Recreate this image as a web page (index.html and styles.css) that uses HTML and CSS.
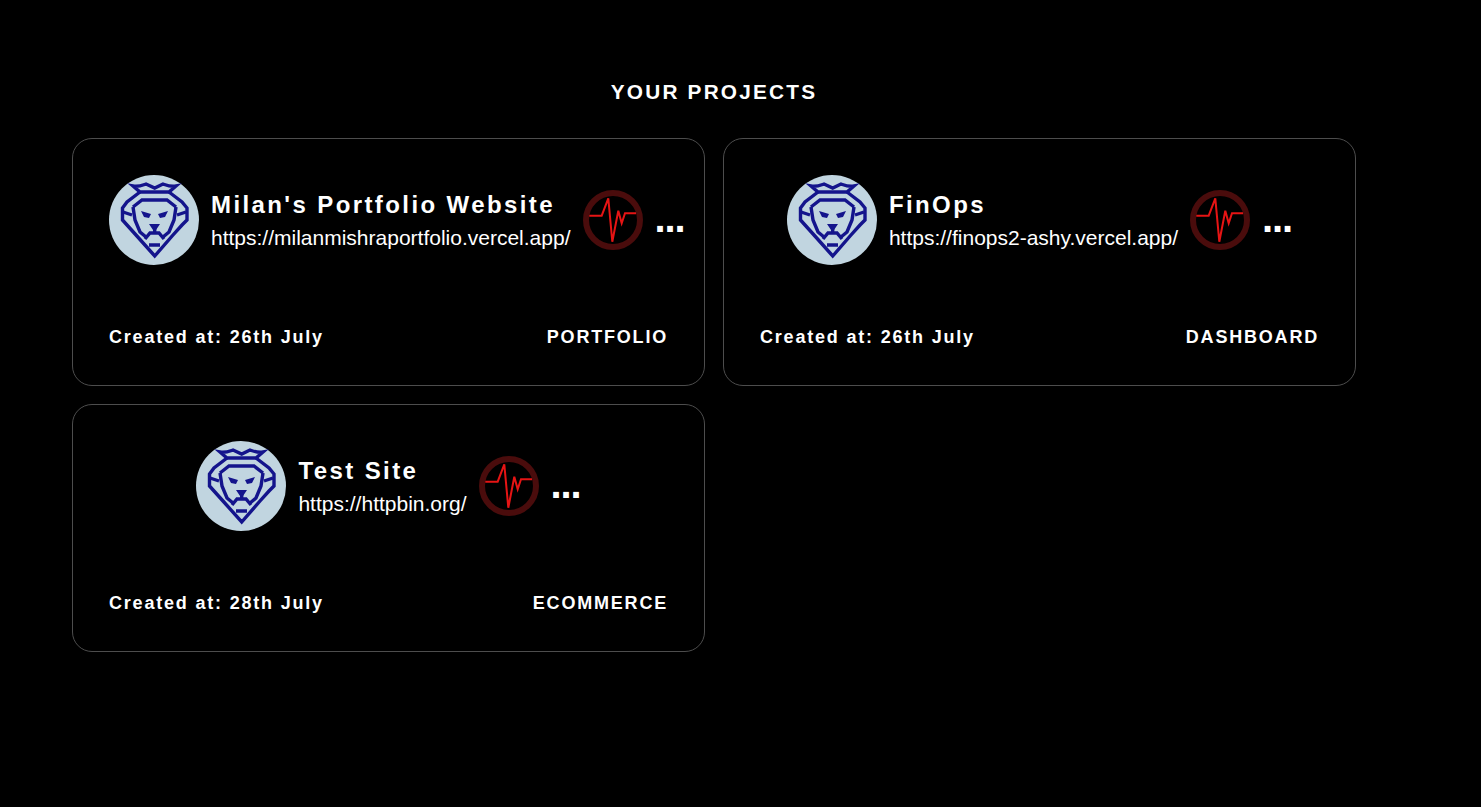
FILE: index.html
```html
<!DOCTYPE html>
<html lang="en">
<head>
<meta charset="utf-8">
<title>Your Projects</title>
<link rel="stylesheet" href="styles.css">
</head>
<body>
<svg class="defs" width="0" height="0" aria-hidden="true">
  <symbol id="lion" viewBox="0 0 90 90">
    <circle cx="45" cy="45" r="45" fill="#c1d5e0"/>
    <g fill="none" stroke="#14148c" stroke-width="3.400" stroke-linejoin="miter" stroke-linecap="butt">
      <path d="M24 11 C30 12 34 10 37 9 L45.700 13 L54 9 C57 10 61 12 67 11 L60 17 H31 Z"/>
      <path d="M31 17 L18 27 L13.500 33 L13.500 45 L18 50 L27 60 L45.700 81 L64 60 L73 50 L78 45 L78 33 L73 27 L60 17"/>
      <path d="M14 37 L23 40 M77 37 L68 40"/>
      <path d="M24 32 L33 25 H58 L67 32"/>
      <path d="M24 32 L26 45 L31 57 L37 62"/>
      <path d="M67 32 L65 45 L60 57 L54 62"/>
      <path d="M45.700 52 V58 M36 64 L41 58 H50 L55 64 M40 70 H51"/>
    </g>
    <path d="M32 36 L42 39 L40 43 L35 42 Z M59 36 L49 39 L51 43 L56 42 Z M40 49 H51 L47 55 H44 Z" fill="#14148c"/>
  </symbol>
  <symbol id="pulse" viewBox="0 0 60 60">
    <circle cx="30" cy="30" r="27" fill="none" stroke="#4a0c0c" stroke-width="6"/>
    <path d="M6.300 25.700 H18.700 L25.300 8.300 L29.300 51.700 L35.300 20.700 L38.700 33.300 L42 23.300 H53" fill="none" stroke="#e61414" stroke-width="2"/>
  </symbol>
</svg>
<main class="page">
  <h1 class="heading">YOUR PROJECTS</h1>
  <section class="grid">
    <article class="card">
      <div class="top">
        <svg class="avatar"><use href="#lion"/></svg>
        <div class="info">
          <h2 class="name">Milan's Portfolio Website</h2>
          <a class="url">https://milanmishraportfolio.vercel.app/</a>
        </div>
        <svg class="pulse"><use href="#pulse"/></svg>
        <span class="more">...</span>
      </div>
      <div class="bottom">
        <span>Created at: 26th July</span>
        <span class="tag">PORTFOLIO</span>
      </div>
    </article>
    <article class="card">
      <div class="top">
        <svg class="avatar"><use href="#lion"/></svg>
        <div class="info">
          <h2 class="name">FinOps</h2>
          <a class="url">https://finops2-ashy.vercel.app/</a>
        </div>
        <svg class="pulse"><use href="#pulse"/></svg>
        <span class="more">...</span>
      </div>
      <div class="bottom">
        <span>Created at: 26th July</span>
        <span class="tag">DASHBOARD</span>
      </div>
    </article>
    <article class="card">
      <div class="top">
        <svg class="avatar"><use href="#lion"/></svg>
        <div class="info">
          <h2 class="name">Test Site</h2>
          <a class="url">https://httpbin.org/</a>
        </div>
        <svg class="pulse"><use href="#pulse"/></svg>
        <span class="more">...</span>
      </div>
      <div class="bottom">
        <span>Created at: 28th July</span>
        <span class="tag">ECOMMERCE</span>
      </div>
    </article>
  </section>
</main>
</body>
</html>
```
FILE: styles.css
```css
* { box-sizing: border-box; }
html, body { margin: 0; height: 100%; }
body {
  background: #000;
  color: #fff;
  font-family: "Liberation Sans", Arial, sans-serif;
  overflow: hidden;
}
.defs { position: absolute; }
.page { padding: 80px 125px 0 72px; }
.heading {
  margin: 0 0 35px;
  font-size: 20.800px;
  line-height: 24px;
  font-weight: 700;
  letter-spacing: 2.200px;
  text-align: center;
}
.grid {
  display: grid;
  margin-top: -1px;
  grid-template-columns: 633px 633px;
  gap: 18px;
}
.card {
  height: 248px;
  padding: 36px;
  border: 1px solid #4d4d4d;
  border-radius: 20px;
  display: flex;
  flex-direction: column;
  justify-content: space-between;
}
.top {
  display: flex;
  align-items: center;
  justify-content: safe center;
  gap: 12px;
}
.avatar { width: 90px; height: 90px; flex: none; }
.pulse { width: 60px; height: 60px; flex: none; }
.info { flex: none; }
.name {
  margin: 0 0 7px;
  font-size: 24px;
  line-height: 28px;
  font-weight: 700;
  letter-spacing: 2.400px;
}
.url {
  display: block;
  font-size: 21px;
  line-height: 24px;
  color: #fff;
}
.more {
  flex: none;
  margin-bottom: 3px;
  font-size: 40px;
  line-height: 41px;
  font-weight: 700;
  letter-spacing: -1.100px;
}
.bottom {
  display: flex;
  justify-content: space-between;
  font-size: 18px;
  line-height: 23px;
  font-weight: 700;
  letter-spacing: 1.800px;
}
```
